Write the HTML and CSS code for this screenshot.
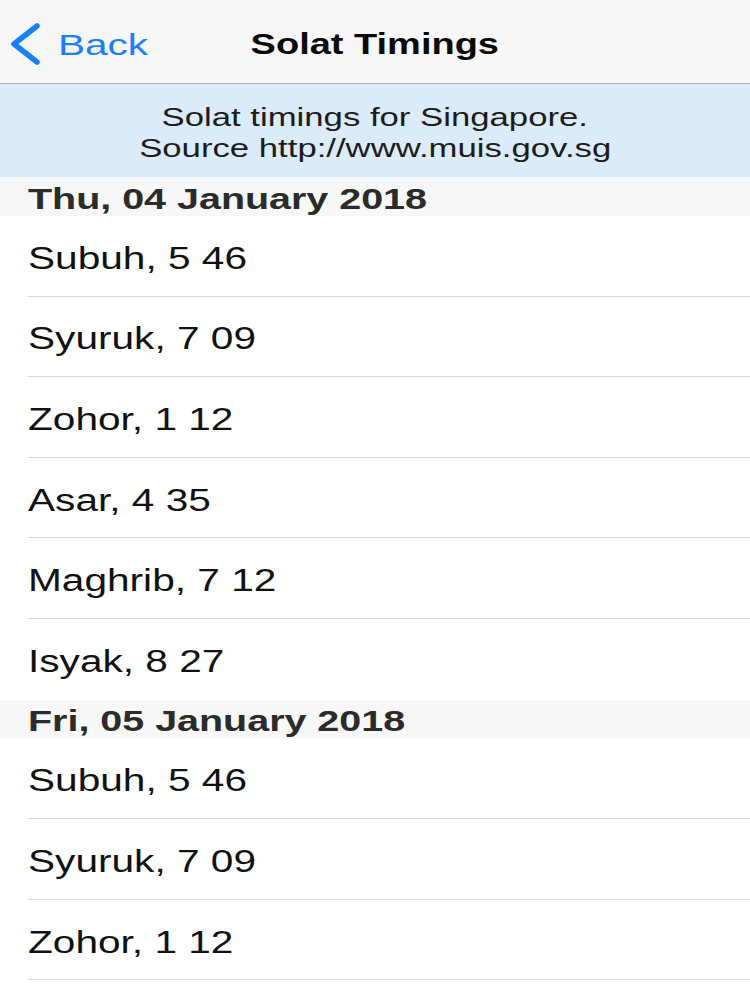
FILE: index.html
```html
<!DOCTYPE html>
<html lang="en">
<head>
  <meta charset="UTF-8" />
  <meta name="viewport" content="width=device-width, initial-scale=1.0"/>
  <title>Solat Timings</title>
  <link rel="stylesheet" href="styles.css">
</head>
<body>
  <div class="navbar">
    <div class="back">
      <svg class="chevron" width="34" height="42" viewBox="0 0 34 42">
        <polyline points="29,3 6,21 29,39" fill="none" stroke="#1a7ffb" stroke-width="5.5" stroke-linecap="round" stroke-linejoin="round"/>
      </svg>
      <span class="wide back-text">Back</span>
    </div>
    <h1><span class="wide center">Solat Timings</span></h1>
  </div>

  <div class="banner">
    <p><span class="wide center">Solat timings for Singapore.</span></p>
    <p><span class="wide center">Source http://www.muis.gov.sg</span></p>
  </div>

  <div class="list">
    <div class="section-header"><span class="wide head">Thu, 04 January 2018</span></div>
    <div class="row"><span class="wide">Subuh, 5 46</span></div>
    <div class="row"><span class="wide">Syuruk, 7 09</span></div>
    <div class="row"><span class="wide">Zohor, 1 12</span></div>
    <div class="row"><span class="wide">Asar, 4 35</span></div>
    <div class="row"><span class="wide">Maghrib, 7 12</span></div>
    <div class="row last"><span class="wide">Isyak, 8 27</span></div>

    <div class="section-header"><span class="wide head">Fri, 05 January 2018</span></div>
    <div class="row"><span class="wide">Subuh, 5 46</span></div>
    <div class="row"><span class="wide">Syuruk, 7 09</span></div>
    <div class="row"><span class="wide">Zohor, 1 12</span></div>
  </div>
</body>
</html>
```

FILE: styles.css
```css
html, body {
  overflow: hidden;
}

body {
  font-family: "Liberation Sans", Arial, sans-serif;
  margin: 0;
  background-color: #ffffff;
  color: #111111;
}

/* screenshot text is horizontally stretched */
.wide {
  display: inline-block;
  transform: scaleX(1.31);
  transform-origin: left center;
  white-space: nowrap;
}

.wide.center {
  transform-origin: center center;
}

.navbar {
  position: relative;
  height: 83px;
  background-color: #f7f7f8;
  border-bottom: 1px solid #b4b4b6;
  display: flex;
  align-items: center;
  justify-content: center;
}

.back {
  position: absolute;
  left: 8px;
  top: 23px;
  display: flex;
  align-items: center;
  gap: 16px;
  color: #1a7ffb;
  font-size: 30px;
}

.back-text {
  transform: scaleX(1.35);
  padding-top: 2px;
}

.chevron {
  display: block;
}

.navbar h1 {
  margin: 0;
  font-size: 29px;
  font-weight: bold;
  color: #0a0a0a;
  padding-top: 6px;
}

.banner {
  box-sizing: border-box;
  height: 93px;
  padding-top: 4px;
  background-color: #dcebf9;
  display: flex;
  flex-direction: column;
  justify-content: center;
  align-items: center;
  color: #1c1c1c;
}

.banner p {
  margin: 0;
  font-size: 26.5px;
  line-height: 31px;
}

.section-header {
  box-sizing: border-box;
  height: 39px;
  background-color: #f7f7f7;
  padding-left: 28px;
  padding-top: 5px;
  display: flex;
  align-items: center;
  font-size: 29px;
  font-weight: bold;
  color: #2b2b2b;
}

.head {
  transform: scaleX(1.36);
}

.row {
  box-sizing: border-box;
  height: 80.6px;
  margin-left: 28px;
  padding-top: 6px;
  border-bottom: 1px solid #d6d6d8;
  display: flex;
  align-items: center;
  font-size: 31px;
  color: #111111;
}

.row.last {
  border-bottom: none;
}
```
